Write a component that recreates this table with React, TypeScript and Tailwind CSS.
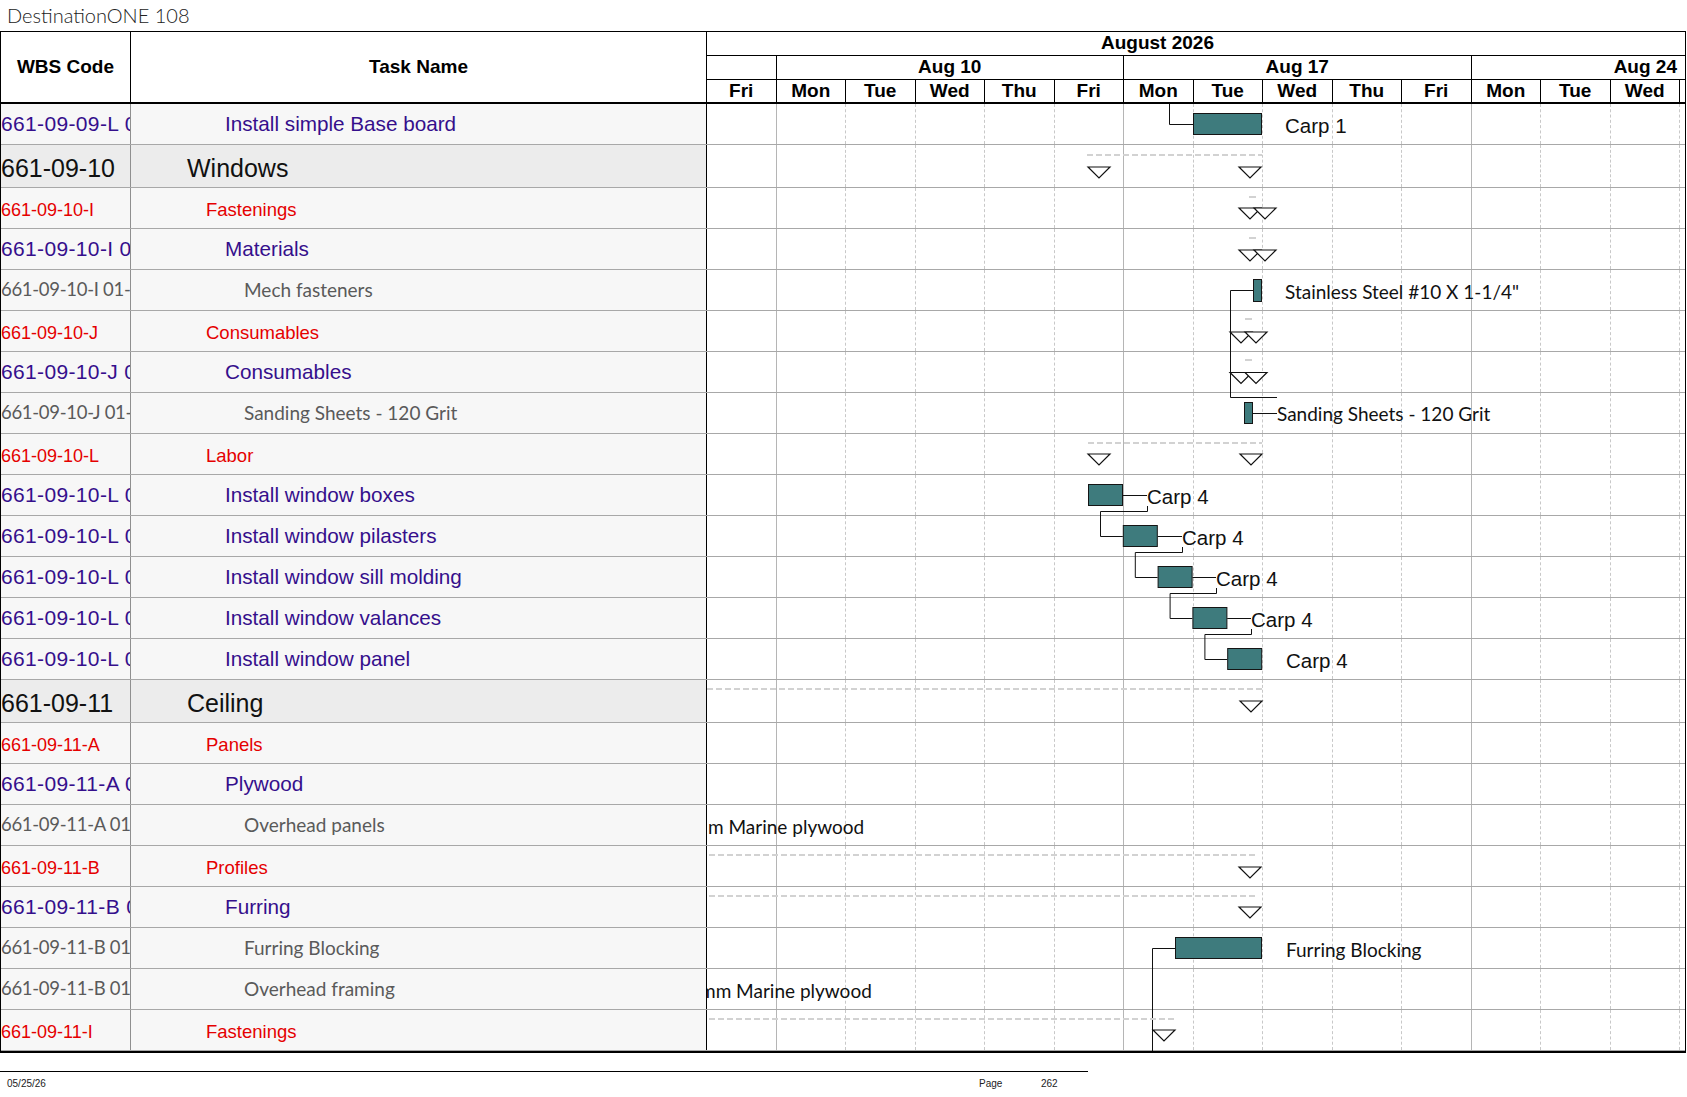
type Level = 1 | 2 | 3 | 4;

type Row = { wbs: string; name: string; level: Level };

const rows: Row[] = [
  { wbs: "661-09-09-L 01", name: "Install simple Base board", level: 3 },
  { wbs: "661-09-10", name: "Windows", level: 1 },
  { wbs: "661-09-10-I", name: "Fastenings", level: 2 },
  { wbs: "661-09-10-I 01", name: "Materials", level: 3 },
  { wbs: "661-09-10-I 01-01", name: "Mech fasteners", level: 4 },
  { wbs: "661-09-10-J", name: "Consumables", level: 2 },
  { wbs: "661-09-10-J 01", name: "Consumables", level: 3 },
  { wbs: "661-09-10-J 01-01", name: "Sanding Sheets - 120 Grit", level: 4 },
  { wbs: "661-09-10-L", name: "Labor", level: 2 },
  { wbs: "661-09-10-L 01", name: "Install window boxes", level: 3 },
  { wbs: "661-09-10-L 02", name: "Install window pilasters", level: 3 },
  { wbs: "661-09-10-L 03", name: "Install window sill molding", level: 3 },
  { wbs: "661-09-10-L 04", name: "Install window valances", level: 3 },
  { wbs: "661-09-10-L 05", name: "Install window panel", level: 3 },
  { wbs: "661-09-11", name: "Ceiling", level: 1 },
  { wbs: "661-09-11-A", name: "Panels", level: 2 },
  { wbs: "661-09-11-A 01", name: "Plywood", level: 3 },
  { wbs: "661-09-11-A 01-01", name: "Overhead panels", level: 4 },
  { wbs: "661-09-11-B", name: "Profiles", level: 2 },
  { wbs: "661-09-11-B 01", name: "Furring", level: 3 },
  { wbs: "661-09-11-B 01-01", name: "Furring Blocking", level: 4 },
  { wbs: "661-09-11-B 01-02", name: "Overhead framing", level: 4 },
  { wbs: "661-09-11-I", name: "Fastenings", level: 2 },
];

// per outline level: row height/background, wbs text, task name text
const levelStyle: Record<Level, { row: string; wbs: string; name: string }> = {
  1: {
    row: "h-[43px] bg-[#ececec]",
    wbs: "pt-[5px] text-[25px] text-[#111]",
    name: "pt-[5px] pl-[56px] text-[25px] text-[#111]",
  },
  2: {
    row: "h-[41px] bg-[#f7f7f7]",
    wbs: "pt-[4px] text-[18px] text-[#e50000]",
    name: "pt-[4px] pl-[75px] text-[18.5px] text-[#e50000]",
  },
  3: {
    row: "h-[41px] bg-[#f7f7f7]",
    wbs: "text-[21px] tracking-[0.35px] text-[#350f8c]",
    name: "pl-[94px] text-[20.7px] text-[#350f8c]",
  },
  4: {
    row: "h-[41px] bg-[#f7f7f7]",
    wbs: "font-['Lato',sans-serif] text-[18.5px] tracking-[-0.3px] text-[#5a5a5a]",
    name: "pl-[113px] font-['Lato',sans-serif] text-[19px] text-[#5a5a5a]",
  },
};

const days = ["Fri", "Mon", "Tue", "Wed", "Thu", "Fri", "Mon", "Tue", "Wed", "Thu", "Fri", "Mon", "Tue", "Wed"];
const weekEnds = [0, 5, 10];

function GridCells() {
  return (
    <>
      {days.map((_, i) => (
        <div
          key={i}
          className={
            weekEnds.includes(i)
              ? "w-[69.5px] shrink-0 border-r border-[#b5b5b5]"
              : "w-[69.5px] shrink-0 border-r border-dashed border-[#c8c8c8]"
          }
        />
      ))}
      <div className="flex-1" />
    </>
  );
}

const BAR = "#3e7b7d";
const LABEL_ARIAL = "'Liberation Sans', Arial, sans-serif";
const LABEL_CAL = "Lato, sans-serif";

function Bar({ x, y, w, h }: { x: number; y: number; w: number; h: number }) {
  return <rect x={x + 0.5} y={y + 0.5} width={w - 1} height={h - 1} fill={BAR} stroke="#151515" strokeWidth={1} />;
}

function Tri({ x, y }: { x: number; y: number }) {
  return <path d={`M${x} ${y}H${x + 22}L${x + 11} ${y + 11}Z`} fill="white" stroke="#111" strokeWidth={1.2} />;
}

function SumLine({ x1, x2, y }: { x1: number; x2: number; y: number }) {
  return <line x1={x1} x2={x2} y1={y} y2={y} stroke="#d2d2d2" strokeWidth={2} strokeDasharray="6 3" />;
}

function Label({ x, y, text, cal }: { x: number; y: number; text: string; cal?: boolean }) {
  return (
    <text x={x} y={y} fill="#111" fontFamily={cal ? LABEL_CAL : LABEL_ARIAL} fontSize={cal ? 19 : 20.5}>
      {text}
    </text>
  );
}

function GanttOverlay() {
  const carpText = [1147, 1182, 1216, 1251, 1286];
  return (
    <svg
      className="pointer-events-none absolute left-0 top-0"
      width={1684}
      height={947}
      viewBox="1 104 1684 947"
    >
      <defs>
        <clipPath id="tl">
          <rect x={707} y={104} width={978} height={947} />
        </clipPath>
      </defs>
      <g clipPath="url(#tl)" fill="none">
        {/* base board */}
        <polyline points="1169.5,104 1169.5,124.5 1193,124.5" stroke="#111" fill="none" />
        <Bar x={1193} y={113} w={69} h={22} />
        <Label x={1285} y={132.5} text="Carp 1" />

        {/* Windows summary */}
        <SumLine x1={1087} x2={1262} y={155} />
        <Tri x={1088} y={167} />
        <Tri x={1239} y={167} />

        {/* Fastenings / Materials */}
        <line x1={1249} x2={1256} y1={197} y2={197} stroke="#d2d2d2" strokeWidth={2} />
        <Tri x={1239} y={208} />
        <Tri x={1254} y={208} />
        <line x1={1249} x2={1256} y1={238} y2={238} stroke="#d2d2d2" strokeWidth={2} />
        <Tri x={1239} y={250} />
        <Tri x={1254} y={250} />

        {/* Mech fasteners */}
        <polyline points="1253,290.5 1230.5,290.5 1230.5,397.5 1277,397.5" stroke="#111" fill="none" />
        <Bar x={1253} y={279} w={9} h={23} />
        <Label x={1285} y={298.5} text={'Stainless Steel #10 X 1-1/4"'} cal />

        {/* Consumables */}
        <line x1={1245} x2={1252} y1={319} y2={319} stroke="#d2d2d2" strokeWidth={2} />
        <Tri x={1230} y={332} />
        <Tri x={1245} y={332} />
        <line x1={1245} x2={1252} y1={360} y2={360} stroke="#d2d2d2" strokeWidth={2} />
        <Tri x={1230} y={372.5} />
        <Tri x={1245} y={372.5} />

        {/* Sanding sheets */}
        <Bar x={1244} y={402} w={9} h={22} />
        <line x1={1253} x2={1277} y1={413.5} y2={413.5} stroke="#111" />
        <Label x={1277} y={421} text="Sanding Sheets - 120 Grit" cal />

        {/* Labor summary */}
        <SumLine x1={1088} x2={1262} y={443} />
        <Tri x={1088} y={454} />
        <Tri x={1240} y={454} />

        {/* window cascade */}
        {carpText.map((tx, i) => {
          const top = 475 + 41 * i;
          const x0 = 1088 + 34.8 * i;
          return (
            <g key={i}>
              {i < 4 && (
                <>
                  <line x1={x0 + 34.8} x2={tx} y1={top + 20.5} y2={top + 20.5} stroke="#111" />
                  <polyline
                    points={`${tx + 0.5},${top + 31} ${tx + 0.5},${top + 36.5} ${x0 + 12.5},${top + 36.5} ${x0 + 12.5},${top + 61.5} ${x0 + 34.8},${top + 61.5}`}
                    stroke="#111"
                    fill="none"
                  />
                </>
              )}
              <Bar x={x0} y={top + 9} w={35} h={22} />
              <Label x={tx} y={top + 28.5} text="Carp 4" />
            </g>
          );
        })}

        {/* Ceiling summary */}
        <SumLine x1={707} x2={1262} y={689} />
        <Tri x={1240} y={701} />

        {/* Overhead panels: label of a bar that starts before the visible range */}
        <Label x={708} y={833.5} text="m Marine plywood" cal />

        {/* Profiles / Furring */}
        <SumLine x1={709} x2={1258} y={855} />
        <Tri x={1239} y={867} />
        <SumLine x1={709} x2={1258} y={896} />
        <Tri x={1239} y={907} />

        {/* Furring Blocking */}
        <polyline points="1175,948.5 1152.5,948.5 1152.5,1051" stroke="#111" fill="none" />
        <Bar x={1175} y={937} w={87} h={22} />
        <Label x={1286} y={956.5} text="Furring Blocking" cal />

        {/* Overhead framing */}
        <Label x={700} y={997.5} text="mm Marine plywood" cal />

        {/* Fastenings summary */}
        <SumLine x1={709} x2={1175} y={1019} />
        <Tri x={1153} y={1030} />
      </g>
    </svg>
  );
}

export default function App() {
  return (
    <div className="min-h-screen bg-white font-['Liberation_Sans',Arial,sans-serif] text-black">
      <div className="h-[31px] pl-[7px] pt-[3px] font-['Lato',sans-serif] text-[20px] font-light leading-[24px] text-[#222]">
        DestinationONE 108
      </div>

      <div className="w-[1686px] border-x border-t border-black">
        {/* header */}
        <div className="flex h-[72px] border-b-2 border-black">
          <div className="flex w-[130px] shrink-0 items-center justify-center border-r border-black text-[19px] font-bold">
            WBS Code
          </div>
          <div className="flex w-[576px] shrink-0 items-center justify-center border-r border-black text-[19px] font-bold">
            Task Name
          </div>
          <div className="flex flex-1 flex-col text-[19px] font-bold">
            <div className="flex h-[24px] items-center border-b border-black pl-[394px]">August 2026</div>
            <div className="flex h-[24px] border-b border-black">
              <div className="w-[69.5px] shrink-0 border-r border-black" />
              <div className="flex w-[347.5px] shrink-0 items-center justify-center border-r border-black">Aug 10</div>
              <div className="flex w-[347.5px] shrink-0 items-center justify-center border-r border-black">Aug 17</div>
              <div className="flex flex-1 items-center justify-end pr-[8px]">Aug 24</div>
            </div>
            <div className="flex h-[22px]">
              {days.map((d, i) => (
                <div key={i} className="flex w-[69.5px] shrink-0 items-center justify-center border-r border-black">
                  {d}
                </div>
              ))}
              <div className="flex-1" />
            </div>
          </div>
        </div>

        {/* body */}
        <div className="relative border-b-2 border-black">
          {rows.map((r, i) => {
            const s = levelStyle[r.level];
            return (
              <div key={i} className={`flex border-b border-[#a8a8a8] last:border-b-0 ${s.row}`}>
                <div
                  className={`flex w-[130px] shrink-0 items-center overflow-hidden whitespace-nowrap border-r border-[#8f8f8f] ${s.wbs}`}
                >
                  {r.wbs}
                </div>
                <div
                  className={`flex w-[576px] shrink-0 items-center overflow-hidden whitespace-nowrap border-r border-black ${s.name}`}
                >
                  {r.name}
                </div>
                <div className="flex flex-1 bg-white">
                  <GridCells />
                </div>
              </div>
            );
          })}
          <GanttOverlay />
        </div>
      </div>

      {/* page footer */}
      <div className="mt-[18px] w-[1088px] border-t border-black">
        <div className="flex pt-[6px] text-[10px] leading-[12px] text-[#222]">
          <span className="w-[979px] shrink-0 pl-[7px]">05/25/26</span>
          <span className="w-[62px] shrink-0">Page</span>
          <span>262</span>
        </div>
      </div>
    </div>
  );
}
